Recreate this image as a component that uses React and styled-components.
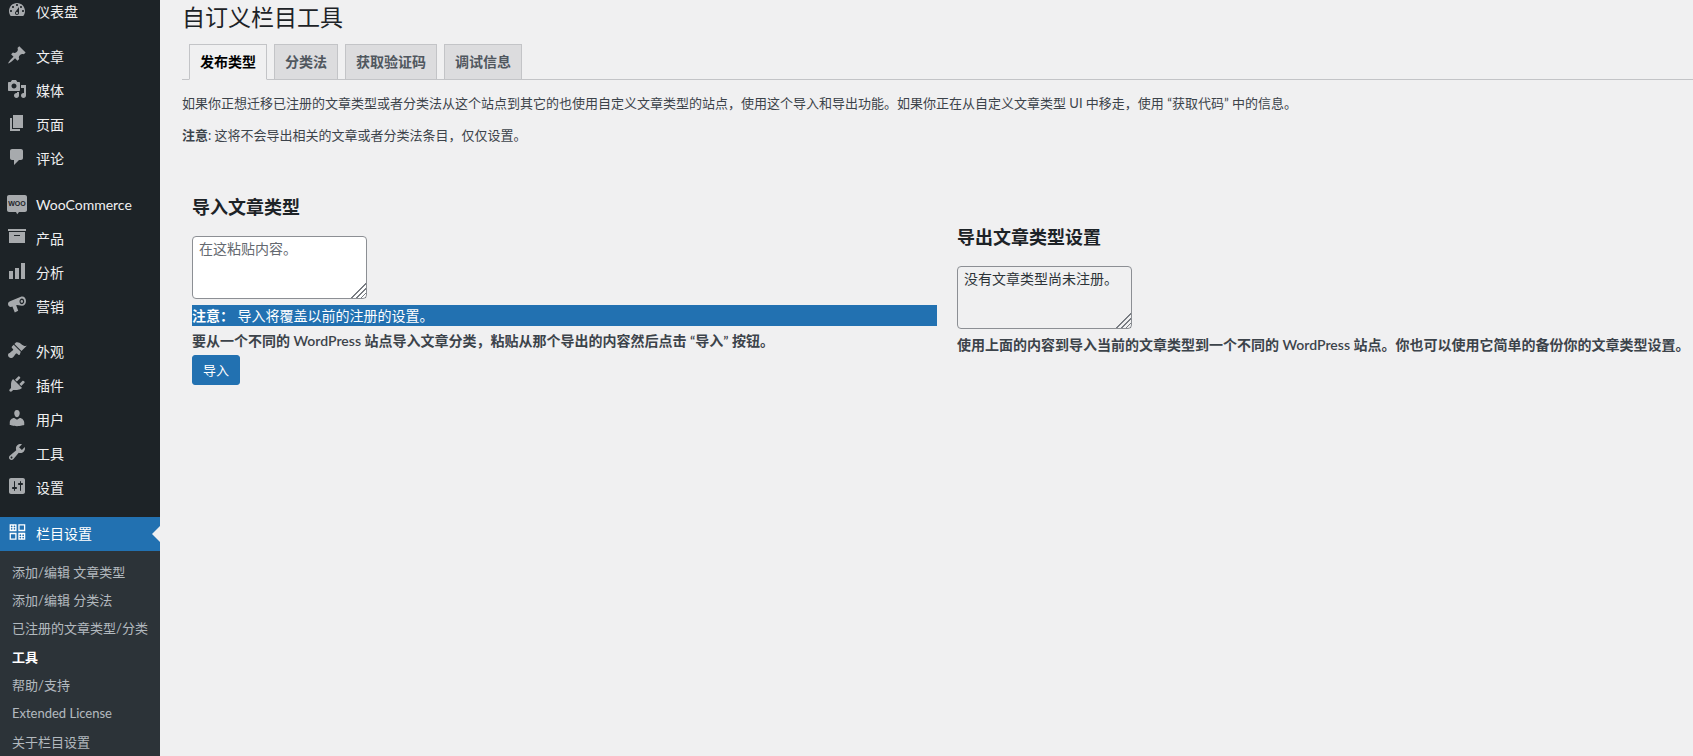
import styled, { createGlobalStyle } from "styled-components";

const FONT = 'Lato, "Noto Sans CJK SC", "Liberation Sans", sans-serif';

const GlobalStyle = createGlobalStyle`
  html, body {
    margin: 0;
    padding: 0;
    height: 756px;
    overflow: hidden;
    background: #f0f0f1;
    font-family: ${FONT};
    font-size: 13px;
    color: #3c434a;
  }
  * { box-sizing: border-box; }
`;

const Page = styled.div`
  display: flex;
  height: 756px;
  overflow: hidden;
`;

const Sidebar = styled.nav`
  flex: 0 0 160px;
  width: 160px;
  background: #1d2327;
  height: 756px;
  overflow: hidden;
`;

const Menu = styled.ul`
  list-style: none;
  margin: -5.5px 0 0;
  padding: 0;
`;

const MenuItem = styled.li`
  display: flex;
  align-items: center;
  position: relative;
  height: 34px;
  margin-top: ${(p) => (p.$gap ? "11.6px" : "0")};
  padding-left: 7px;
  font-size: 14px;
  line-height: 18px;
  color: ${(p) => (p.$active ? "#fff" : "#f0f0f1")};
  background: ${(p) => (p.$active ? "#2271b1" : "transparent")};

  ${(p) =>
    p.$active &&
    `&::after {
      content: "";
      position: absolute;
      right: 0;
      top: 9px;
      border: 8px solid transparent;
      border-right-color: #f0f0f1;
      border-left-width: 0;
    }`}
`;

const MenuIcon = styled.svg`
  width: 20px;
  height: 20px;
  flex: none;
  margin-right: 9px;
  margin-top: ${(p) => p.$up || 0}px;
  fill: ${(p) => p.$color || "#a7aaad"};
`;

const SubMenu = styled.ul`
  list-style: none;
  margin: 0;
  padding: 7px 0 0;
  background: #2c3338;
  height: 240px;
`;

const SubItem = styled.li`
  height: 28.3px;
  line-height: 28.3px;
  padding-left: 12px;
  font-size: 13px;
  white-space: nowrap;
  color: ${(p) => (p.$current ? "#fff" : "rgba(240, 246, 252, 0.7)")};
  font-weight: ${(p) => (p.$current ? 700 : 400)};
`;

const Main = styled.main`
  flex: 1;
  min-width: 0;
  padding: 0 0 0 22px;
`;

const Title = styled.h1`
  margin: 0;
  padding-top: 2px;
  font-size: 23px;
  line-height: 30px;
  font-weight: 400;
  color: #1d2327;
`;

const Tabs = styled.div`
  display: flex;
  gap: 7px;
  height: 36px;
  margin-top: 12px;
  padding-left: 7px;
  border-bottom: 1px solid #c3c4c7;
`;

const Tab = styled.div`
  height: 36px;
  padding: 0 10px;
  border: 1px solid #c3c4c7;
  border-bottom: ${(p) => (p.$active ? "1px solid #f0f0f1" : "1px solid #c3c4c7")};
  background: ${(p) => (p.$active ? "#f0f0f1" : "#dcdcde")};
  color: ${(p) => (p.$active ? "#000" : "#50575e")};
  font-size: 14px;
  font-weight: 600;
  line-height: 34px;
  white-space: nowrap;
`;

const Paragraph = styled.p`
  margin: ${(p) => p.$top}px 0 0;
  font-size: 13px;
  line-height: 18px;
  white-space: nowrap;
`;

const Columns = styled.div`
  display: grid;
  grid-template-columns: 745px auto;
  column-gap: 20px;
  align-items: center;
  margin-top: 51px;
  padding-left: 10px;
`;

const Column = styled.section`
  min-width: 0;
`;

const Heading = styled.h2`
  margin: 0 0 17px;
  font-size: 18px;
  line-height: 24px;
  font-weight: 700;
  color: #1d2327;
`;

const Box = styled.textarea`
  display: block;
  width: 175px;
  height: 63px;
  margin: 0;
  padding: 2px 6px;
  border: 1px solid #8c8f94;
  border-radius: 4px;
  background: ${(p) => (p.$plain ? "transparent" : "#fff")};
  color: #2c3338;
  font-family: ${FONT};
  font-size: 14px;
  line-height: 20px;
  outline: none;

  &::placeholder {
    color: #646970;
    opacity: 1;
  }

  &::-webkit-resizer {
    background:
      linear-gradient(135deg, ${(p) => (p.$plain ? "#f0f0f1" : "#fff")} 48%, transparent 48%),
      repeating-linear-gradient(135deg, #787c82 0 1.3px, transparent 1.3px 3.4px);
  }
`;

const Notice = styled.div`
  margin-top: 6px;
  height: 21px;
  background: #2271b1;
  color: #fff;
  font-size: 14px;
  line-height: 21px;
  white-space: pre;
`;

const Strong = styled.strong`
  font-weight: 700;
`;

const Help = styled.p`
  margin: ${(p) => p.$top}px 0 0;
  font-size: 14px;
  font-weight: 600;
  line-height: 20px;
  white-space: nowrap;
`;

const Button = styled.button`
  display: block;
  width: 48px;
  height: 30px;
  margin-top: 4px;
  padding: 0;
  border: 1px solid #2271b1;
  border-radius: 3px;
  background: #2271b1;
  color: #fff;
  font-family: ${FONT};
  font-size: 13px;
  line-height: 28px;
`;

const ICONS = {
  dashboard:
    "M3.76 16h12.48c1.1-1.37 1.76-3.11 1.76-5 0-4.42-3.58-8-8-8s-8 3.58-8 8c0 1.89.66 3.63 1.76 5zM10 4c.55 0 1 .45 1 1s-.45 1-1 1-1-.45-1-1 .45-1 1-1zM6 6c.55 0 1 .45 1 1s-.45 1-1 1-1-.45-1-1 .45-1 1-1zm8 0c.55 0 1 .45 1 1s-.45 1-1 1-1-.45-1-1 .45-1 1-1zm-5.37 5.55L12 7v6c0 1.1-.9 2-2 2s-2-.9-2-2c0-.57.24-1.08.63-1.45zM4 10c.55 0 1 .45 1 1s-.45 1-1 1-1-.45-1-1 .45-1 1-1zm12 0c.55 0 1 .45 1 1s-.45 1-1 1-1-.45-1-1 .45-1 1-1zm-5 3c0-.55-.45-1-1-1s-1 .45-1 1 .45 1 1 1 1-.45 1-1z",
  pin: "M10.44 3.02l1.82-1.82 6.36 6.35-1.83 1.82c-1.05-.68-2.48-.57-3.41.36l-.75.75c-.92.93-1.04 2.35-.35 3.41l-1.83 1.82-2.41-2.41-2.8 2.79c-.42.42-3.38 2.71-3.8 2.29s1.86-3.39 2.28-3.81l2.79-2.79L4.1 9.36l1.83-1.82c1.05.69 2.48.57 3.4-.36l.75-.75c.93-.92 1.05-2.35.36-3.41z",
  media:
    "M13 11V4c0-.55-.45-1-1-1h-1.67L9 1H5L3.67 3H2c-.55 0-1 .45-1 1v7c0 .55.45 1 1 1h10c.55 0 1-.45 1-1zM7 4.5c1.38 0 2.5 1.12 2.5 2.5S8.38 9.5 7 9.5 4.5 8.38 4.5 7 5.62 4.5 7 4.5zM14 6h5v10.5c0 1.38-1.12 2.5-2.5 2.5S14 17.88 14 16.5s1.12-2.5 2.5-2.5c.17 0 .34.02.5.05V9h-3V6zm-4 8.05V13h2v3.5c0 1.38-1.12 2.5-2.5 2.5S7 17.88 7 16.5 8.12 14 9.5 14c.17 0 .34.02.5.05z",
  page: "M6 15V2h10v13H6zm-1 1h8v2H3V5h2v11z",
  comment:
    "M5 2h9c1.1 0 2 .9 2 2v7c0 1.1-.9 2-2 2h-2l-5 5v-5H5c-1.1 0-2-.9-2-2V4c0-1.1.9-2 2-2z",
  archive: "M19 2v2H1V2h18zM2 5h16v11H2V5zm11 4V8H7v1h6z",
  chart: "M18 18V2h-4v16h4zm-6 0V7H8v11h4zm-6 0v-8H2v8h4z",
  megaphone:
    "M14.5 1.5c2.4-.6 4.5 1.6 4.5 4.5 0 2.8-1.9 5-4.2 4.8l-4.8-.9-.8.3 2 5.6-3.4 1.7-2.4-6-1.4.4C2.4 12 1 10.7 1 9c0-1.4.9-2.4 2-2.8zm.4 1.9c-1.3 0-2.4 1.4-2.4 3s1.1 2.8 2.4 2.8 2.3-1.3 2.3-2.9-1-2.9-2.3-2.9zm-.1 1.6c.7 0 1.2.6 1.2 1.4s-.5 1.4-1.2 1.4-1.2-.6-1.2-1.4.5-1.4 1.2-1.4z",
  brush:
    "M14.48 11.06L7.41 3.99l1.5-1.5c.5-.56 2.3-.47 3.51.32 1.21.8 1.43 1.28 2.91 2.1 1.18.64 2.45 1.26 4.45.85zm-.71.71L6.7 4.7 4.93 6.47c-.39.39-.39 1.02 0 1.41l1.06 1.06c.39.39.39 1.03 0 1.42-.6.6-1.43 1.11-2.21 1.69-.35.26-.7.53-1.01.84C1.43 13.23 1 14.07 1 15c0 1.66 1.34 3 3 3 .93 0 1.77-.43 2.31-1.09.31-.31.58-.66.84-1.01.58-.78 1.09-1.61 1.69-2.21.39-.39 1.03-.39 1.42 0l1.06 1.06c.39.39 1.02.39 1.41 0z",
  plugin:
    "M13.11 4.36L9.87 7.6 8 5.73l3.24-3.24c.35-.34 1.05-.2 1.56.32.52.51.66 1.21.31 1.55zm-8 1.77l.91-1.12 9.01 9.01-1.19.84c-.71.71-2.63 1.16-3.82 1.16H6.14L4.9 17.26c-.59.59-1.54.59-2.12 0-.59-.58-.59-1.53 0-2.12l1.24-1.24v-3.88c0-1.13.4-3.19 1.09-3.89zm7.26 3.97l3.24-3.24c.34-.35 1.04-.21 1.55.31.52.51.66 1.21.31 1.55l-3.24 3.25z",
  users:
    "M10 9.25c-2.27 0-2.73-3.44-2.73-3.44C7 4.02 7.82 2 9.97 2c2.16 0 2.98 2.02 2.71 3.81 0 0-.41 3.44-2.68 3.44zm0 2.57L12.72 10c2.39 0 4.52 2.33 4.52 4.53v2.49s-3.65 1.13-7.24 1.13c-3.65 0-7.24-1.13-7.24-1.13v-2.49c0-2.25 1.94-4.48 4.47-4.48z",
  tools:
    "M16.68 9.77c-1.34 1.34-3.3 1.67-4.95.99l-5.41 6.52c-.99.99-2.59.99-3.58 0s-.99-2.59 0-3.57l6.52-5.42c-.68-1.65-.35-3.61.99-4.95 1.28-1.28 3.12-1.62 4.72-1.06l-2.89 2.89 2.82 2.82 2.86-2.87c.53 1.58.18 3.39-1.08 4.65zM3.81 16.21c.4.39 1.04.39 1.43 0 .4-.4.4-1.04 0-1.43-.39-.4-1.03-.4-1.43 0-.39.39-.39 1.03 0 1.43z",
  settings:
    "M18 16V4c0-1.1-.9-2-2-2H4c-1.1 0-2 .9-2 2v12c0 1.1.9 2 2 2h12c1.1 0 2-.9 2-2zM8 11h1c.55 0 1 .45 1 1s-.45 1-1 1H8v1.5c0 .28-.22.5-.5.5s-.5-.22-.5-.5V13H6c-.55 0-1-.45-1-1s.45-1 1-1h1V5.5c0-.28.22-.5.5-.5s.5.22.5.5V11zm5-2h-1c-.55 0-1-.45-1-1s.45-1 1-1h1V5.5c0-.28.22-.5.5-.5s.5.22.5.5V7h1c.55 0 1 .45 1 1s-.45 1-1 1h-1v5.5c0 .28-.22.5-.5.5s-.5-.22-.5-.5V9z",
};

const Icon = ({ name, up }) => (
  <MenuIcon viewBox="0 0 20 20" $up={up}>
    <path d={ICONS[name]} />
  </MenuIcon>
);

const WooIcon = () => (
  <MenuIcon viewBox="0 0 20 20">
    <path d="M2 0h16c1.1 0 2 .9 2 2v13c0 1.1-.9 2-2 2h-6l-1.8 2.2L9 17H2c-1.1 0-2-.9-2-2V2C0 .9.9 0 2 0z" />
    <text
      x="10"
      y="11"
      textAnchor="middle"
      fontSize="7"
      fontWeight="700"
      fontFamily="Liberation Sans, sans-serif"
      fill="#1d2327"
    >
      WOO
    </text>
  </MenuIcon>
);

const GridIcon = () => (
  <MenuIcon viewBox="-2 -1.5 23 23" $color="#fff" $up={-4}>
    <path
      fillRule="evenodd"
      d="M1 1h8v8H1V1zm2.4 1.6a1 1 0 1 0 0 2 1 1 0 0 0 0-2zm3.2 0a1 1 0 1 0 0 2 1 1 0 0 0 0-2zM3.4 5.4a1 1 0 1 0 0 2 1 1 0 0 0 0-2zm3.2 0a1 1 0 1 0 0 2 1 1 0 0 0 0-2zM11 1h8v8h-8V1zm1.5 1.5v5h5v-5h-5zM1 11h8v8H1v-8zm1.5 1.5v5h5v-5h-5zM11 11h8v8h-8v-8zm2.4 1.6a1 1 0 1 0 0 2 1 1 0 0 0 0-2zm3.2 0a1 1 0 1 0 0 2 1 1 0 0 0 0-2zm-3.2 2.8a1 1 0 1 0 0 2 1 1 0 0 0 0-2zm3.2 0a1 1 0 1 0 0 2 1 1 0 0 0 0-2z"
    />
  </MenuIcon>
);

const menuItems = [
  { icon: "dashboard", label: "仪表盘", up: -4 },
  { icon: "pin", label: "文章", gap: true, up: -4 },
  { icon: "media", label: "媒体", up: -4 },
  { icon: "page", label: "页面", up: -4 },
  { icon: "comment", label: "评论", up: -4 },
  { woo: true, label: "WooCommerce", gap: true },
  { icon: "archive", label: "产品", up: -4 },
  { icon: "chart", label: "分析", up: -4 },
  { icon: "megaphone", label: "营销", up: -4 },
  { icon: "brush", label: "外观", gap: true, up: -4 },
  { icon: "plugin", label: "插件", up: -4 },
  { icon: "users", label: "用户", up: -4 },
  { icon: "tools", label: "工具", up: -4 },
  { icon: "settings", label: "设置", up: -4 },
];

const subItems = [
  "添加/编辑 文章类型",
  "添加/编辑 分类法",
  "已注册的文章类型/分类",
  "工具",
  "帮助/支持",
  "Extended License",
  "关于栏目设置",
];

const tabs = ["发布类型", "分类法", "获取验证码", "调试信息"];

export default function App() {
  return (
    <>
      <GlobalStyle />
      <Page>
        <Sidebar>
          <Menu>
            {menuItems.map((item) => (
              <MenuItem key={item.label} $gap={item.gap}>
                {item.woo ? <WooIcon /> : <Icon name={item.icon} up={item.up} />}
                {item.label}
              </MenuItem>
            ))}
            <MenuItem $gap $active>
              <GridIcon />
              栏目设置
            </MenuItem>
          </Menu>
          <SubMenu>
            {subItems.map((label) => (
              <SubItem key={label} $current={label === "工具"}>
                {label}
              </SubItem>
            ))}
          </SubMenu>
        </Sidebar>
        <Main>
          <Title>自订义栏目工具</Title>
          <Tabs>
            {tabs.map((label, i) => (
              <Tab key={label} $active={i === 0}>
                {label}
              </Tab>
            ))}
          </Tabs>
          <Paragraph $top={14}>
            如果你正想迁移已注册的文章类型或者分类法从这个站点到其它的也使用自定义文章类型的站点，使用这个导入和导出功能。如果你正在从自定义文章类型 UI 中移走，使用 “获取代码” 中的信息。
          </Paragraph>
          <Paragraph $top={14}>
            <Strong>注意</Strong>: 这将不会导出相关的文章或者分类法条目，仅仅设置。
          </Paragraph>
          <Columns>
            <Column>
              <Heading>导入文章类型</Heading>
              <Box placeholder="在这粘贴内容。" />
              <Notice>
                <Strong>注意：</Strong>
                {" 导入将覆盖以前的注册的设置。"}
              </Notice>
              <Help $top={5}>
                要从一个不同的 WordPress 站点导入文章分类，粘贴从那个导出的内容然后点击 “导入” 按钮。
              </Help>
              <Button type="button">导入</Button>
            </Column>
            <Column>
              <Heading>导出文章类型设置</Heading>
              <Box $plain readOnly defaultValue="没有文章类型尚未注册。" />
              <Help $top={6}>
                使用上面的内容到导入当前的文章类型到一个不同的 WordPress 站点。你也可以使用它简单的备份你的文章类型设置。
              </Help>
            </Column>
          </Columns>
        </Main>
      </Page>
    </>
  );
}
